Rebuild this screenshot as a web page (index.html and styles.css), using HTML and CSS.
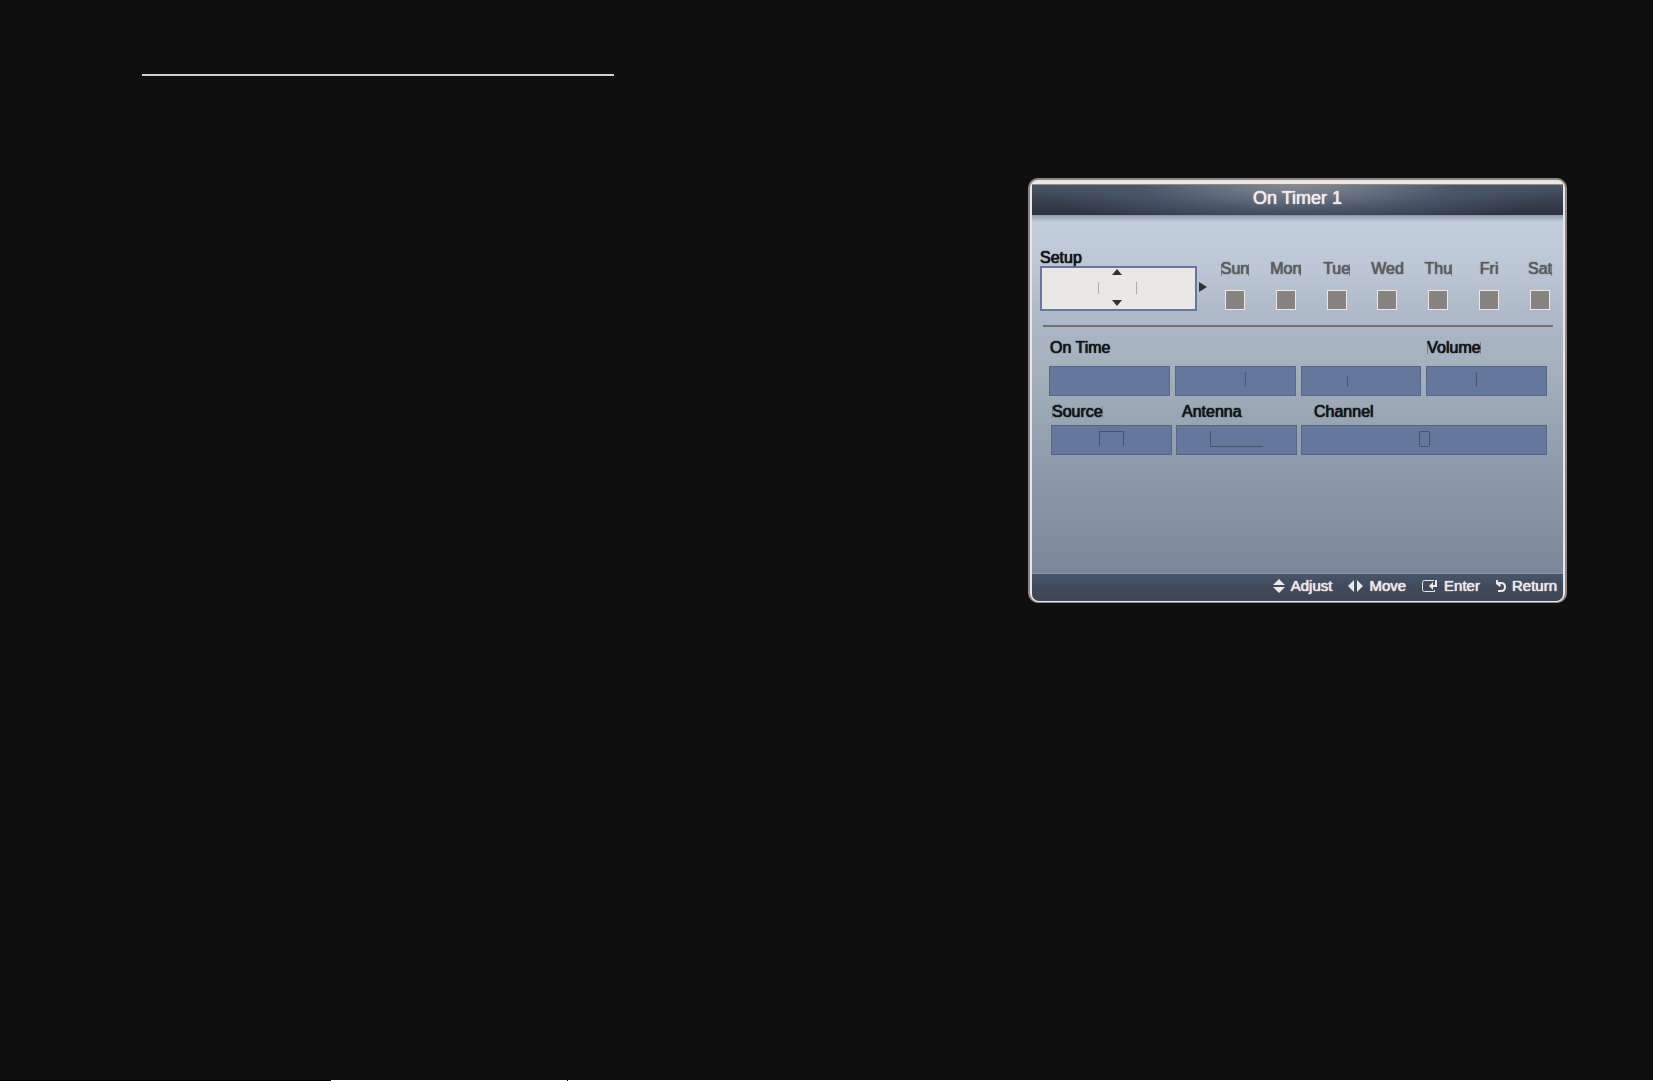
FILE: index.html
```html
<!DOCTYPE html>
<html lang="en">
<head>
    <meta charset="UTF-8">
    <meta name="viewport" content="width=device-width, initial-scale=1.0">
    <title>On Timer 1</title>
    <link rel="stylesheet" href="styles.css">
</head>
<body>
    <hr class="page-rule">

    <main>
        <form class="panel">
            <h1>On Timer 1</h1>

            <div class="content">
                <div class="setup-row">
                    <div class="setup">
                        <label for="setup">Setup</label>
                        <div class="spinner">
                            <button type="button" class="arrow" aria-label="Previous">
                                <svg width="10" height="6"><path d="M5 0L10 6H0Z"/></svg>
                            </button>
                            <input type="text" id="setup" readonly>
                            <button type="button" class="arrow" aria-label="Next">
                                <svg width="10" height="6"><path d="M0 0H10L5 6Z"/></svg>
                            </button>
                        </div>
                    </div>
                    <svg class="next" width="8" height="10"><path d="M0 0L8 5L0 10Z"/></svg>
                    <div class="days">
                        <label><span class="edge-left edge-right">Sun</span><input type="checkbox" name="sun"></label>
                        <label><span class="edge-right">Mon</span><input type="checkbox" name="mon"></label>
                        <label><span class="edge-right">Tue</span><input type="checkbox" name="tue"></label>
                        <label><span>Wed</span><input type="checkbox" name="wed"></label>
                        <label><span class="edge-right">Thu</span><input type="checkbox" name="thu"></label>
                        <label><span>Fri</span><input type="checkbox" name="fri"></label>
                        <label><span class="edge-right">Sat</span><input type="checkbox" name="sat"></label>
                    </div>
                </div>

                <hr class="divider">

                <div class="fields time-fields">
                    <label for="hour" class="wide">On Time</label>
                    <label for="volume"><span class="edge-left edge-right">Volume</span></label>
                    <button type="button" id="hour"></button>
                    <button type="button" aria-label="Minute">
                        <svg viewBox="0 0 121 30"><path d="M70.5 6V21"/></svg>
                    </button>
                    <button type="button" aria-label="AM or PM">
                        <svg viewBox="0 0 121 30"><path d="M46.5 10V21"/></svg>
                    </button>
                    <button type="button" id="volume">
                        <svg viewBox="0 0 121 30"><path d="M50.5 6V21"/></svg>
                    </button>
                </div>

                <div class="fields source-fields">
                    <label for="source"><span class="edge-left edge-right">Source</span></label>
                    <label for="antenna" class="indent">Antenna</label>
                    <label for="channel" class="indent-more">Channel</label>
                    <button type="button" id="source">
                        <svg viewBox="0 0 121 30"><path d="M48.5 21V6.5H72.5V21"/></svg>
                    </button>
                    <button type="button" id="antenna">
                        <svg viewBox="0 0 121 30"><path d="M34.5 6V21.5H87"/></svg>
                    </button>
                    <button type="button" id="channel">
                        <svg viewBox="0 0 246 30"><rect x="118.5" y="6.5" width="10" height="15" rx="1"/></svg>
                    </button>
                </div>
            </div>

            <footer>
                <span class="hint">
                    <svg width="12" height="14"><path d="M6 0L12 6H0ZM0 8H12L6 14Z"/></svg>
                    Adjust
                </span>
                <span class="hint">
                    <svg width="15" height="12"><path d="M6 0V12L0 6ZM9 0V12L15 6Z"/></svg>
                    Move
                </span>
                <span class="hint">
                    <svg width="16" height="12">
                        <path class="line" d="M12 .5H2.5Q.5 .5 .5 2.5V9.500Q.5 11.5 2.5 11.5H12.5V10"/>
                        <path d="M7 6L11 2V5H13V0H15V7H11V10Z"/>
                    </svg>
                    Enter
                </span>
                <span class="hint">
                    <svg width="10" height="12">
                        <path class="bold-line" d="M1 3H5Q9 3 9 7Q9 11 5 11H2"/>
                        <path d="M0 0H2L2 2L5 5L4 7L0 4Z"/>
                    </svg>
                    Return
                </span>
            </footer>
        </form>
    </main>

    <div class="page-edge"><span></span><span></span><span></span></div>
</body>
</html>
```
FILE: styles.css
```css
* {
    margin: 0;
    padding: 0;
    box-sizing: border-box;
}

body {
    background-color: #0f0f0f;
    font-family: "Liberation Sans", Arial, sans-serif;
    font-size: 16px;
    line-height: 16px;
    min-height: 100vh;
    display: flex;
    flex-direction: column;
}

svg {
    display: block;
    fill: currentColor;
}

.page-rule {
    width: 472px;
    max-width: 80%;
    height: 2px;
    border: none;
    background-color: #cfd1d1;
    margin: 74px 0 0 142px;
}

main {
    display: flex;
    justify-content: flex-end;
    padding: 102px 86px 40px;
}

.panel {
    width: 539px;
    background-color: #ece7e5;
    border: 2px solid #8c8785;
    border-bottom-width: 1px;
    border-radius: 10px;
    padding: 4px 2px 1px;
    text-shadow: 0 0 1px currentColor, 0 0 1px currentColor;
}

h1 {
    height: 31px;
    border-top: 1px solid #8d8c8e;
    font-size: 18px;
    font-weight: normal;
    line-height: 26px;
    text-align: center;
    color: #efebe9;
    background: radial-gradient(ellipse 50% 150% at 50% 0, #858b96, rgba(75, 88, 108, 0.8) 60%, transparent),
        linear-gradient(#48566a, #363c4a 60%, #2f3341);
}

.content {
    min-height: 358px;
    padding: 33px 10px 0 8px;
    color: #151517;
    background:
        linear-gradient(90deg, transparent, #7d94be, transparent) top / 100% 1px no-repeat,
        linear-gradient(rgba(90, 105, 135, 0.5), transparent) top / 100% 7px no-repeat,
        linear-gradient(#c4cfdd, #bcc6d4 15%, #abb6c6 31%, #a6b1bc 42%, #8f9bac 70%, #7b8798);
}

label {
    padding-top: 2px;
}

.setup-row {
    display: flex;
    align-items: flex-end;
}

.setup {
    width: 157px;
}

.setup label {
    display: block;
}

.spinner {
    height: 45px;
    background-color: #e9e8e6;
    border: 2px solid #66779e;
    padding: 1px 3px 3px 0;
    display: flex;
    flex-direction: column;
    align-items: center;
    justify-content: space-between;
}

.spinner input {
    width: 39px;
    height: 12px;
    background: none;
    border: solid #aaa9a8;
    border-width: 0 1px;
}

.arrow {
    background: none;
    border: none;
    color: #333131;
}

.next {
    color: #333131;
    margin: 0 18px 19px 2px;
}

.days {
    flex: 1;
    display: flex;
    justify-content: space-between;
    padding: 0 3px 1px 0;
}

.days label {
    width: 20px;
    display: flex;
    flex-direction: column;
    align-items: center;
    gap: 13px;
    color: #5e5c5d;
}

.days input {
    appearance: none;
    width: 20px;
    height: 20px;
    background-color: #878381;
    border: 1px solid #ebe8e6;
}

.edge-left,
.edge-right {
    background: linear-gradient(#7d828b, #7d828b) right 3px / 1px 12px no-repeat;
}

.edge-left {
    background: linear-gradient(#7d828b, #7d828b) left 3px / 1px 12px no-repeat,
        linear-gradient(#7d828b, #7d828b) right 3px / 1px 12px no-repeat;
}

.divider {
    height: 2px;
    border: none;
    background-color: #75716f;
    margin: 14px 0 11px 3px;
}

.fields {
    display: grid;
    margin-right: 6px;
}

.fields label {
    padding-left: 1px;
}

.time-fields {
    grid-template-columns: repeat(4, 1fr);
    gap: 10px 5px;
    margin-left: 9px;
}

.source-fields {
    grid-template-columns: 121px 121px 1fr;
    gap: 5px 4px;
    margin-top: 6px;
    margin-left: 11px;
}

.wide {
    grid-column: span 3;
}

.fields .indent {
    padding-left: 6px;
}

.fields .indent-more {
    padding-left: 13px;
}

.fields button {
    height: 30px;
    background-color: #66779e;
    border: none;
    box-shadow: inset 0 0 0 1px #576789;
}

.fields svg {
    width: 100%;
    height: 30px;
    fill: none;
    stroke: #48546f;
}

footer {
    height: 28px;
    padding: 0 6px 3px;
    border-top: 1px solid #8695aa;
    border-radius: 0 0 7px 7px;
    background: linear-gradient(#46546b, #414a5b 50%, #3e4555);
    color: #ece8e6;
    font-size: 15px;
    display: flex;
    align-items: center;
    justify-content: flex-end;
    gap: 16px;
}

.hint {
    display: flex;
    align-items: center;
    gap: 6px;
}

.line,
.bold-line {
    fill: none;
    stroke: currentColor;
}

.bold-line {
    stroke-width: 2px;
}

.page-edge {
    height: 1px;
    margin-top: auto;
    background-color: #fff;
    display: flex;
}

.page-edge span {
    width: 20%;
    background-color: #000;
}

.page-edge span:nth-child(2) {
    width: 236px;
    background-color: #fff;
}

.page-edge span:last-child {
    width: 1px;
}
```
